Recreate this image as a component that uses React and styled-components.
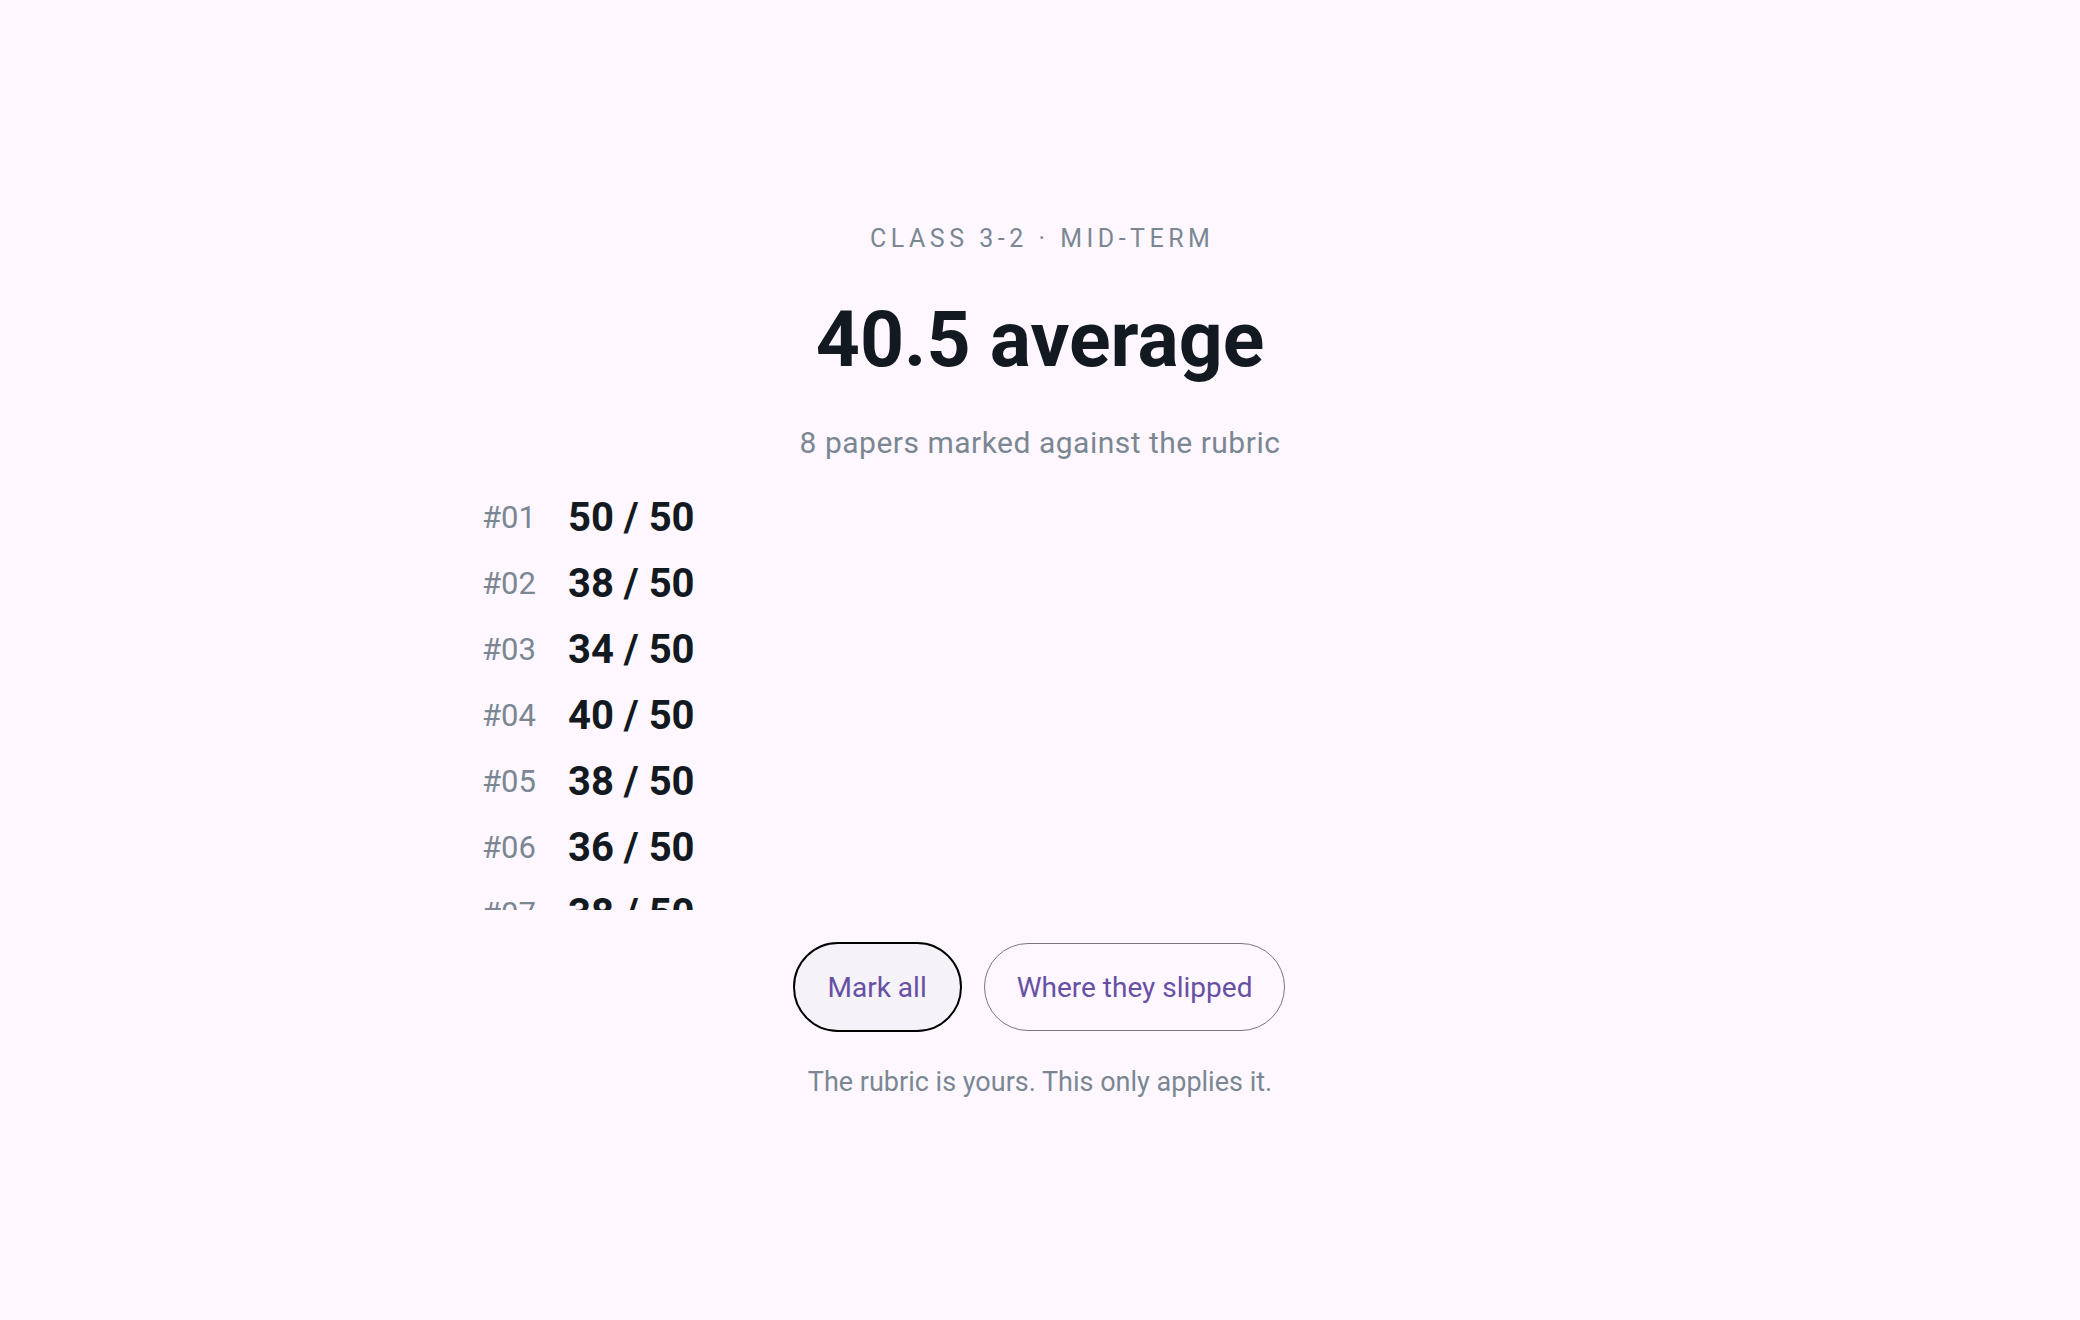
import React from "react";
import styled, { createGlobalStyle } from "styled-components";

const GlobalStyle = createGlobalStyle`
	* {
		box-sizing: border-box;
	}
	body {
		margin: 0;
		background: #fef7ff;
		font-family: Roboto, "Noto Sans", sans-serif;
	}
`

const Page = styled.main`
	min-height: 100vh;
	display: flex;
	flex-direction: column;
	align-items: center;
	padding-top: 224px;
`

const Eyebrow = styled.div`
	font-size: 25px;
	line-height: 30px;
	letter-spacing: 0.18em;
	text-transform: uppercase;
	color: #7a8793;
	margin-right: -0.18em;
`

const Title = styled.h1`
	margin: 44px 0 0;
	font-size: 77px;
	line-height: 84px;
	font-weight: 700;
	color: #121920;
`

const Sub = styled.p`
	margin: 42px 0 0;
	font-size: 30px;
	line-height: 38px;
	letter-spacing: 0.5px;
	color: #7a8793;
`

const List = styled.ul`
	list-style: none;
	margin: 23px 0 0;
	padding: 0;
	width: 1120px;
	height: 425px;
	overflow: hidden;
`

const Row = styled.li`
	display: flex;
	align-items: center;
	height: 66px;
	line-height: 66px;
`

const Num = styled.span`
	width: 88px;
	padding-left: 2px;
	font-size: 31px;
	color: #7a8793;
`

const Score = styled.span`
	font-size: 40px;
	font-weight: 700;
	color: #121920;
`

const Actions = styled.div`
	display: flex;
	align-items: center;
	gap: 22px;
	margin-top: 32px;
	margin-right: 2px;
`

const Button = styled.button`
	height: ${(p) => (p.$active ? "90px" : "88px")};
	padding: 0 ${(p) => (p.$active ? "33px" : "32px")};
	border-radius: 999px;
	border: ${(p) => (p.$active ? "2px solid #000" : "1.5px solid #79747e")};
	background: ${(p) => (p.$active ? "#f5f2f8" : "transparent")};
	color: #6750a4;
	font-family: inherit;
	font-size: 28px;
	cursor: pointer;
`

const Note = styled.p`
	margin: 32px 0 0;
	font-size: 27px;
	line-height: 36px;
	color: #7a8793;
`

const papers = [
	{ id: "#01", score: 50 },
	{ id: "#02", score: 38 },
	{ id: "#03", score: 34 },
	{ id: "#04", score: 40 },
	{ id: "#05", score: 38 },
	{ id: "#06", score: 36 },
	{ id: "#07", score: 38 },
	{ id: "#08", score: 50 },
]

export default function App() {
	const avg = papers.reduce((s, p) => s + p.score, 0) / papers.length
	return (
		<>
			<GlobalStyle />
			<Page>
				<Eyebrow>Class 3-2 · Mid-term</Eyebrow>
				<Title>{avg.toFixed(1)} average</Title>
				<Sub>{papers.length} papers marked against the rubric</Sub>
				<List>
					{papers.map((p) => (
						<Row key={p.id}>
							<Num>{p.id}</Num>
							<Score>{p.score} / 50</Score>
						</Row>
					))}
				</List>
				<Actions>
					<Button $active>Mark all</Button>
					<Button>Where they slipped</Button>
				</Actions>
				<Note>The rubric is yours. This only applies it.</Note>
			</Page>
		</>
	)
}
